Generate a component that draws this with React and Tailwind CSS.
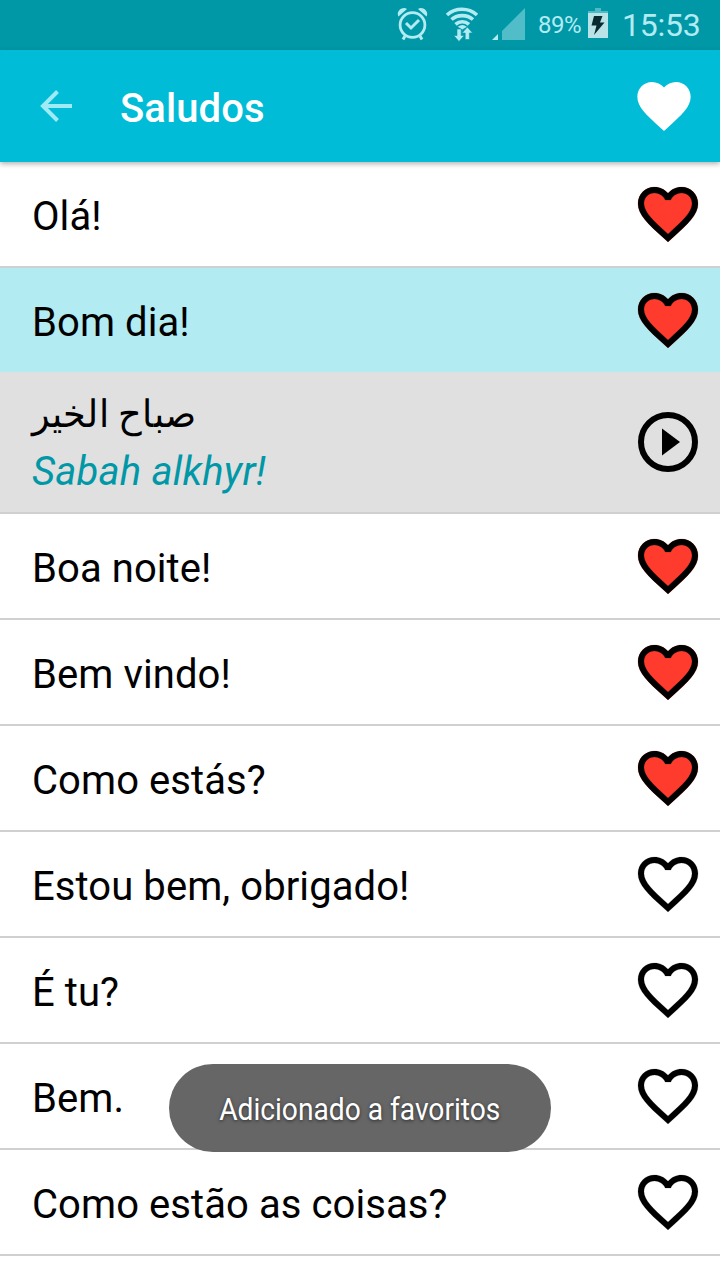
const HEART_OUTLINE = 'M16.5 3c-1.74 0-3.41.81-4.5 2.09C10.91 3.81 9.24 3 7.5 3 4.42 3 2 5.42 2 8.5c0 3.78 3.4 6.86 8.55 11.54L12 21.35l1.45-1.32C18.6 15.36 22 12.28 22 8.5 22 5.42 19.58 3 16.5 3zm-4.4 15.55l-.1.1-.1-.1C7.14 14.24 4 11.39 4 8.5 4 6.5 5.5 5 7.5 5c1.54 0 3.04.99 3.57 2.36h1.87C13.46 5.99 14.96 5 16.5 5c2 0 3.5 1.5 3.5 3.5 0 2.89-3.14 5.74-7.9 10.05z'
const HEART_SOLID = 'M12 21.35l-1.45-1.32C5.4 15.36 2 12.28 2 8.5 2 5.42 4.42 3 7.5 3c1.74 0 3.41.81 4.5 2.09C13.09 3.81 14.76 3 16.5 3 19.58 3 22 5.42 22 8.5c0 3.78-3.4 6.86-8.55 11.54L12 21.35z'

const phrases = [
  { text: 'Olá!', favorite: true },
  { text: 'Bom dia!', favorite: true, translation: 'صباح الخير', reading: 'Sabah alkhyr!' },
  { text: 'Boa noite!', favorite: true },
  { text: 'Bem vindo!', favorite: true },
  { text: 'Como estás?', favorite: true },
  { text: 'Estou bem, obrigado!', favorite: false },
  { text: 'É tu?', favorite: false },
  { text: 'Bem.', favorite: false },
  { text: 'Como estão as coisas?', favorite: false },
]

function StatusBar() {
  return (
    <div className="flex h-[50px] items-center bg-[#0097a7] pl-[396px] text-[#b2ebf2]">
      {/* Alarm */}
      <svg className="h-[50px] w-[34px] shrink-0" viewBox="396 0 34 50" fill="none" stroke="currentColor">
        <circle cx="412.5" cy="25" r="12.4" strokeWidth="2.8" />
        <path d="M406 23l5 5 8-8" strokeWidth="3" />
        <path d="M405 36l-2 3.500M420 36l2 3.500" strokeWidth="3" />
        <path d="M398.500 16.500c-3-5 4-11 8.500-7.500zM426.500 16.500c3-5-4-11-8.500-7.500z" fill="currentColor" stroke="none" />
      </svg>
      {/* Wifi */}
      <svg className="ml-4 h-[50px] w-[34px] shrink-0" viewBox="446 0 34 50" fill="none" stroke="currentColor">
        <path d="M447 15c8.500-7.600 21.500-7.600 30 0M451.500 19.500c6-5.200 15.500-5.200 21.500 0M455.500 24.300c4-3.500 9.500-3.500 13.500 0" strokeWidth="3.6" />
        <path d="M457.800 26.800q4.500-3.500 9 0l-4.500 2.700z" fill="currentColor" stroke="none" />
        <path d="M457 29h4.200v6.500h3l-5.200 6-5.200-6h3.200zM465.200 39.500h4.200v-6.500h3.200l-5.300-6-5.200 6h3.100z" fill="currentColor" stroke="#0097a7" strokeWidth=".6" />
      </svg>
      {/* Signal */}
      <svg className="ml-3 h-[50px] w-[34px] shrink-0" viewBox="492 0 34 50" fill="currentColor">
        <path d="M492 40l6-6v6z" />
        <path d="M502 40v-9l23-23v32z" opacity=".45" />
      </svg>
      <span className="ml-3 w-[44px] shrink-0 whitespace-nowrap text-[24px] tracking-[-0.5px]">89%</span>
      {/* Battery */}
      <svg className="ml-[6px] h-[50px] w-[20px] shrink-0" viewBox="588 0 20 50">
        <path d="M595 8h6v3h7v3h-20v-3h7z" fill="#4dbac5" />
        <path d="M588 13h20v25h-20z" fill="#b9e3e6" />
        <path d="M594 16h8.500l-2.500 6.500h4.500l-10.500 12.500 2.500-9.500h-5z" fill="#092b30" />
      </svg>
      <span className="ml-[14px] whitespace-nowrap text-[32px] tracking-[-0.25px]">15:53</span>
    </div>
  )
}

function Header() {
  return (
    <header className="relative flex h-[112px] items-center bg-[#00bcd7] pr-6 pl-10 shadow-[0_2px_5px_rgba(0,0,0,0.3)]">
      <svg className="h-8 w-8 text-[#9eebf5]" viewBox="0 0 32 32" fill="none" stroke="currentColor" strokeWidth="4">
        <path d="M32 16H3M17.500 1.500L3 16l14.500 14.500" />
      </svg>
      <h1 className="mt-[6px] ml-12 flex-1 text-[40px] leading-none font-medium tracking-[0.1px] text-white">Saludos</h1>
      <svg className="h-[64px] w-[64px]" viewBox="0 0 24 24" fill="#fff">
        <path d={HEART_SOLID} />
      </svg>
    </header>
  )
}

function FavoriteIcon({ active }) {
  return (
    <svg className="h-[72px] w-[72px] shrink-0" viewBox="0 0 24 24">
      {active && <path d={HEART_SOLID} fill="#ff3b2d" />}
      {/* the stroke hides the red fringe along the outer edge */}
      <path d={HEART_OUTLINE} fill="#000" stroke="#000" strokeWidth="0.05" />
    </svg>
  )
}

function PhraseRow({ text, favorite, translation, reading }) {
  return (
    <li>
      <div className={`flex items-center justify-between pr-4 pl-8 ${translation ? 'h-[104px] bg-[#b2ebf2]' : 'h-[106px] border-b-2 border-[#d0d0d0] bg-white'}`}>
        <span className="mt-[6px] text-[40px] leading-none tracking-[0.08px]">{text}</span>
        <FavoriteIcon active={favorite} />
      </div>
      {translation && (
        <div className="flex h-[142px] items-center justify-between border-b-2 border-[#d0d0d0] bg-[#e0e0e0] pr-4 pl-8">
          <div className="flex flex-col items-start">
            <span lang="ar" dir="rtl" className="h-[58px] origin-left scale-x-[0.965] text-[38px] leading-[58px]">{translation}</span>
            <span className="h-[56px] text-[40px] leading-[58px] tracking-[0.2px] text-[#0097a7] italic">{reading}</span>
          </div>
          <svg className="h-[72px] w-[72px] shrink-0" viewBox="0 0 24 24">
            <circle cx="12" cy="12" r="9" fill="none" stroke="#000" strokeWidth="2" />
            <path d="M10 16.5l6-4.5-6-4.5z" />
          </svg>
        </div>
      )}
    </li>
  )
}

export default function App() {
  return (
    <div className="relative h-[1280px] w-[720px] overflow-hidden bg-white font-['Roboto',sans-serif] text-black">
      <StatusBar />
      <Header />
      <ul>
        {phrases.map(p => <PhraseRow key={p.text} {...p} />)}
      </ul>

      {/* Toast */}
      <div className="absolute top-[1064px] left-[169px] flex h-[88px] w-[382px] items-center justify-center rounded-full bg-[#666]">
        <span className="mt-[2px] scale-x-[0.88] text-[32px] whitespace-nowrap text-white [text-shadow:0_1px_4px_rgba(0,0,0,0.6)]">Adicionado a favoritos</span>
      </div>
    </div>
  )
}
